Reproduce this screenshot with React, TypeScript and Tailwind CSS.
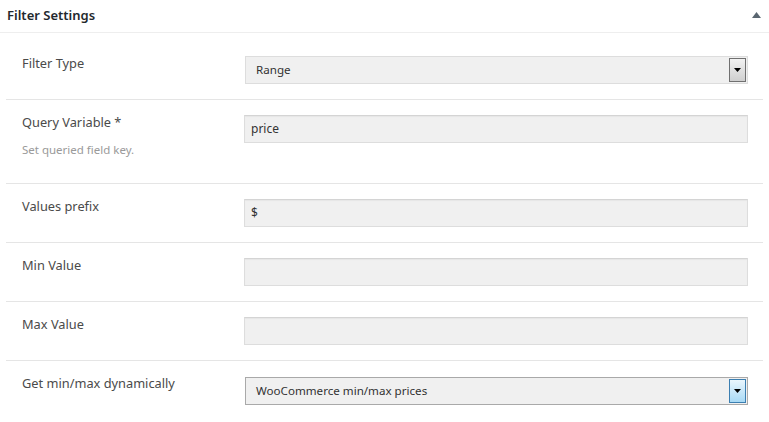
import React from "react";

const font = { fontFamily: '"Noto Sans", "Open Sans", sans-serif' };

function Arrow() {
  return (
    <svg width="7" height="4" viewBox="0 0 7 4" className="block">
      <path d="M0 0H7L3.5 4Z" fill="#000" />
    </svg>
  );
}

function Row({
  label,
  help,
  children,
  last,
}: {
  label: string;
  help?: string;
  children: React.ReactNode;
  last?: boolean;
}) {
  return (
    <div className={`flex ${last ? "" : "border-b border-[#e5e5e5]"}`}>
      <div className="w-[238px] shrink-0 pl-[16px] pt-[12px]">
        <div className="text-[12.8px] leading-[20px] text-[#4a4a4a]">{label}</div>
        {help && (
          <div className="mt-[9px] pb-[24px] text-[11.5px] leading-[18px] text-[#9a9a9a]">{help}</div>
        )}
      </div>
      <div className="flex-1 py-[15px] pr-[15px]">{children}</div>
    </div>
  );
}

function Input({ value }: { value?: string }) {
  return (
    <div className="flex h-[28px] items-center border border-[#ddd] border-t-[#d4d4d4] bg-[#f0f0f0] px-[6px] text-[12px] text-[#333] shadow-[inset_0_1px_1px_rgba(0,0,0,0.04)]">
      {value}
    </div>
  );
}

function Select({ value, focused }: { value: string; focused?: boolean }) {
  return (
    <div
      className={`ml-[1px] flex h-[28px] items-stretch border bg-[#f0f0f0] p-[1px] text-[11.6px] text-[#333] ${
        focused ? "mt-[1px] border-[#a9a9a9]" : "border-[#ddd]"
      }`}
    >
      <div className="flex flex-1 items-center pl-[9px]">{value}</div>
      <div
        className={`flex w-[17px] items-center justify-center border ${
          focused
            ? "border-[#3c7fb1] bg-gradient-to-b from-[#eaf6fd] to-[#a7d9f5]"
            : "border-[#707070] bg-gradient-to-b from-[#f2f2f2] to-[#cfcfcf]"
        }`}
      >
        <Arrow />
      </div>
    </div>
  );
}

export default function App() {
  return (
    <div className="h-[422px] w-[769px] bg-white" style={font}>
      <div className="flex h-[33px] items-start justify-between border-b border-[#eee] pl-[7px] pr-[8px]">
        <div className="pt-[6px] text-[13px] font-semibold leading-[18px] text-[#23282d]">Filter Settings</div>
        <svg width="9" height="6" viewBox="0 0 9 6" className="mt-[12px]">
          <path d="M4.5 0L9 6H0Z" fill="#5a6670" />
        </svg>
      </div>
      <div className="px-[6px] pt-[8px]">
        <Row label="Filter Type">
          <Select value="Range" />
        </Row>
        <Row label="Query Variable *" help="Set queried field key.">
          <Input value="price" />
        </Row>
        <Row label="Values prefix">
          <Input value="$" />
        </Row>
        <Row label="Min Value">
          <Input />
        </Row>
        <Row label="Max Value">
          <Input />
        </Row>
        <Row label="Get min/max dynamically" last>
          <Select value="WooCommerce min/max prices" focused />
        </Row>
      </div>
    </div>
  );
}
